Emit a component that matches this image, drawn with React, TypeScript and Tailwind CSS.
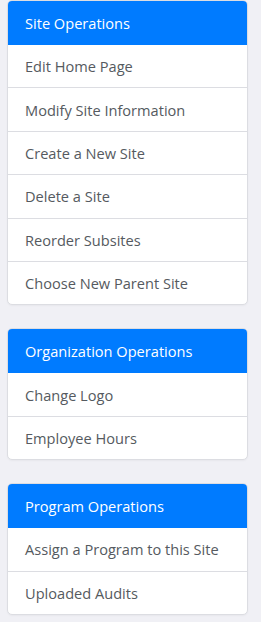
const sections: { title: string; items: string[] }[] = [
  {
    title: 'Site Operations',
    items: [
      'Edit Home Page',
      'Modify Site Information',
      'Create a New Site',
      'Delete a Site',
      'Reorder Subsites',
      'Choose New Parent Site',
    ],
  },
  {
    title: 'Organization Operations',
    items: ['Change Logo', 'Employee Hours'],
  },
  {
    title: 'Program Operations',
    items: ['Assign a Program to this Site', 'Uploaded Audits'],
  },
];

export default function App() {
  return (
    <div
      className="min-h-[622px] bg-[#f0f0f5] pl-[7px] pr-[13px]"
      style={{ fontFamily: '"Open Sans", "Noto Sans", sans-serif' }}
    >
      <div className="flex flex-col gap-[23px]">
        {sections.map((s) => (
          <div
            key={s.title}
            className="overflow-hidden rounded-[5px] border border-[#dcdde2] bg-white shadow-[0_1px_2px_rgba(0,0,0,0.04)]"
          >
            <div className="flex h-[44px] items-center bg-[#007bff] px-[17px] pt-px text-[14.6px] text-white">
              {s.title}
            </div>
            {s.items.map((item, i) => (
              <a
                key={item}
                href="#"
                className={`flex items-center px-[17px] pt-[2px] text-[14.6px] text-[#555a60] ${
                  i < s.items.length - 1 ? 'h-[43.4px] border-b border-[#dcdde2]' : 'h-[42.4px]'
                }`}
              >
                {item}
              </a>
            ))}
          </div>
        ))}
      </div>
    </div>
  );
}
